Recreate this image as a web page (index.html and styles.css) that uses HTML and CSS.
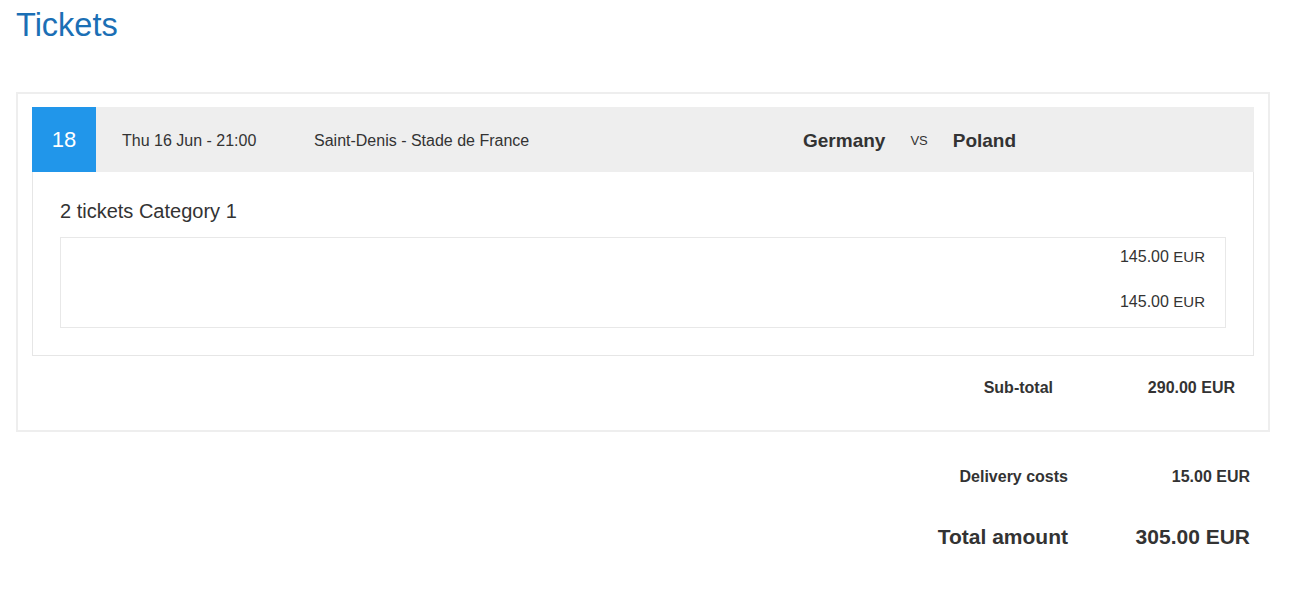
FILE: index.html
```html
<!DOCTYPE html>
<html>
<head>
<meta charset="utf-8">
<link rel="stylesheet" href="styles.css">
</head>
<body>
<div class="page">
  <h1 class="title">Tickets</h1>
  <div class="order-box">
    <div class="match-card">
      <div class="match-header">
        <div class="match-no">18</div>
        <div class="match-date">Thu 16 Jun - 21:00</div>
        <div class="match-venue">Saint-Denis - Stade de France</div>
        <div class="match-teams">
          <span class="team">Germany</span>
          <span class="vs">VS</span>
          <span class="team">Poland</span>
        </div>
      </div>
      <div class="match-body">
        <div class="ticket-cat">2 tickets Category 1</div>
        <div class="price-box">
          <div class="price-row"><span class="amount">145.00</span> <span class="cur">EUR</span></div>
          <div class="price-row"><span class="amount">145.00</span> <span class="cur">EUR</span></div>
        </div>
      </div>
    </div>
    <div class="sum-row subtotal">
      <div class="sum-label">Sub-total</div>
      <div class="sum-value">290.00 EUR</div>
    </div>
  </div>
  <div class="totals">
    <div class="sum-row delivery">
      <div class="sum-label">Delivery costs</div>
      <div class="sum-value">15.00 EUR</div>
    </div>
    <div class="sum-row grand">
      <div class="sum-label">Total amount</div>
      <div class="sum-value">305.00 EUR</div>
    </div>
  </div>
</div>
</body>
</html>
```

FILE: styles.css
```css
* { box-sizing: border-box; }

body {
  margin: 0;
  font-family: "Liberation Sans", Arial, sans-serif;
  color: #333;
  background: #fff;
}

.page {
  padding: 0 23px 0 16px;
}

.title {
  margin: 0;
  padding-top: 6px;
  font-size: 32.5px;
  line-height: 38px;
  font-weight: normal;
  color: #1b6fb5;
}

.order-box {
  margin-top: 48px;
  border: 2px solid #eeeeee;
  padding: 13px 14px 31px 14px;
}

.match-header {
  display: flex;
  align-items: center;
  height: 65px;
  background: #eeeeee;
}

.match-no {
  width: 64px;
  height: 100%;
  background: #2196ea;
  color: #fff;
  font-size: 22px;
  display: flex;
  align-items: center;
  justify-content: center;
}

.match-date {
  margin-left: 26px;
  width: 192px;
  font-size: 16px;
  padding-top: 2px;
}

.match-venue {
  width: 489px;
  font-size: 16px;
  padding-top: 2px;
}

.match-teams {
  display: flex;
  align-items: center;
  padding-top: 2px;
}

.team {
  font-size: 19px;
  font-weight: bold;
}

.vs {
  font-size: 13px;
  margin: 0 25px;
}

.match-body {
  border: 1px solid #e6e6e6;
  border-top: none;
  padding: 27px 27px 27px 27px;
}

.ticket-cat {
  font-size: 20px;
  line-height: 24px;
  margin-bottom: 14px;
}

.price-box {
  border: 1px solid #e8e8e8;
  padding: 8px 20px 14px 20px;
  display: flex;
  flex-direction: column;
  align-items: flex-end;
  gap: 23px;
}

.price-row {
  line-height: 22px;
}

.amount { font-size: 16px; }
.cur { font-size: 15px; }

.sum-row {
  display: flex;
  justify-content: flex-end;
  font-weight: bold;
}

.sum-value {
  width: 182px;
  text-align: right;
}

.subtotal {
  margin-top: 21px;
  padding-right: 19px;
  font-size: 16px;
  line-height: 22px;
}

.totals {
  padding-right: 20px;
}

.delivery {
  margin-top: 34px;
  font-size: 16px;
  line-height: 22px;
}

.grand {
  margin-top: 36px;
  font-size: 21px;
  line-height: 26px;
}
```
